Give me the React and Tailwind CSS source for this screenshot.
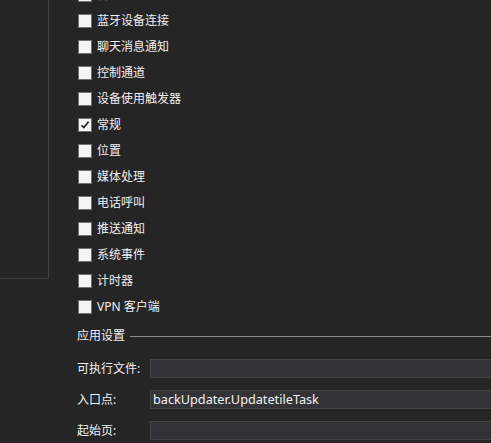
import React from "react";

const tasks = [
  { label: "音频", checked: false },
  { label: "蓝牙设备连接", checked: false },
  { label: "聊天消息通知", checked: false },
  { label: "控制通道", checked: false },
  { label: "设备使用触发器", checked: false },
  { label: "常规", checked: true },
  { label: "位置", checked: false },
  { label: "媒体处理", checked: false },
  { label: "电话呼叫", checked: false },
  { label: "推送通知", checked: false },
  { label: "系统事件", checked: false },
  { label: "计时器", checked: false },
  { label: "VPN 客户端", checked: false },
];

const fields = [
  { label: "可执行文件:", value: "" },
  { label: "入口点:", value: "backUpdater.UpdatetileTask" },
  { label: "起始页:", value: "" },
];

const Checkbox = ({ checked }) => (
  <div className="w-[14px] h-[14px] shrink-0 bg-[#f5f5f5] border border-[#717171] flex items-center justify-center">
    {checked && (
      <svg width="10" height="10" viewBox="0 0 10 10">
        <path d="M1.5 5.2 L3.8 7.6 L8.6 1.8" fill="none" stroke="#1e1e1e" strokeWidth="1.6" />
      </svg>
    )}
  </div>
);

export default function App() {
  return (
    <div
      className="w-[491px] h-[443px] overflow-hidden bg-[#252526] text-[#f1f1f1] text-[12px] flex"
      style={{ fontFamily: '"Noto Sans", "Noto Sans CJK SC", sans-serif' }}
    >
      {/* left tree panel edge */}
      <div className="w-[49px] h-[279px] shrink-0 border-r border-b border-[#3f3f46]" />

      <div className="flex-1 flex flex-col pl-[28px] min-w-0">
        <div className="flex flex-col mt-[-18px]">
          {tasks.map((t) => (
            <div key={t.label} className="h-[26px] flex items-center gap-[5px] pl-px">
              <Checkbox checked={t.checked} />
              <span className="leading-none">{t.label}</span>
            </div>
          ))}
        </div>

        {/* section header */}
        <div className="mt-[8px] h-[16px] flex items-center gap-[5px]">
          <span className="leading-none">应用设置</span>
          <div className="flex-1 h-px bg-[#8a8a8a]" />
        </div>

        <div className="mt-[15px] flex flex-col gap-[12px]">
          {fields.map((f) => (
            <div key={f.label} className="flex items-center h-[19px]">
              <span className="w-[73px] shrink-0 leading-none">{f.label}</span>
              <div className="flex-1 h-[19px] bg-[#333337] border border-[#434346] flex items-center px-[2px] min-w-0 mr-[-10px]">
                <span className="leading-none whitespace-nowrap text-[12.7px]">{f.value}</span>
              </div>
            </div>
          ))}
        </div>
      </div>
    </div>
  );
}
